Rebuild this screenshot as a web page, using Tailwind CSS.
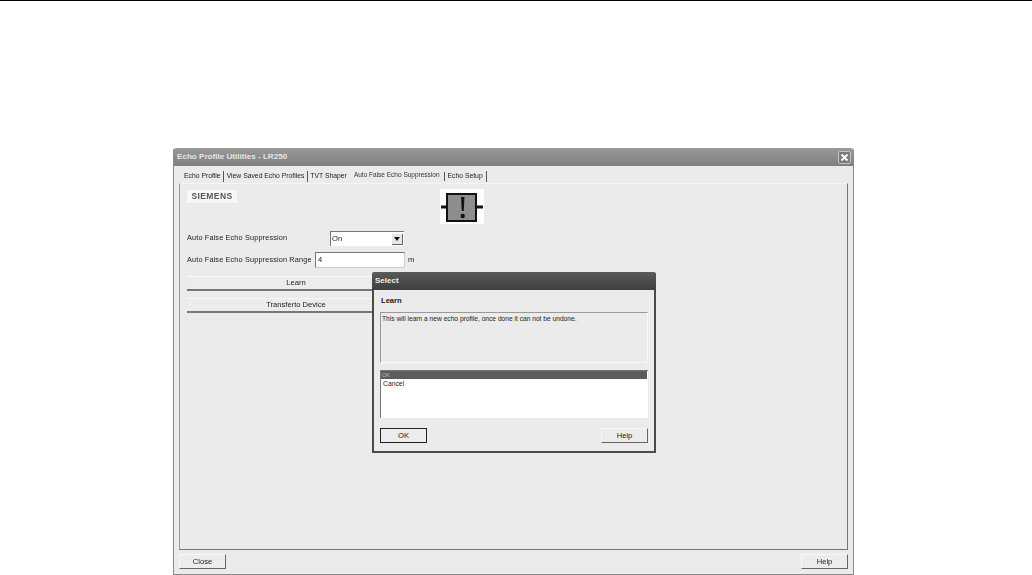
<!DOCTYPE html>
<html>
<head>
<meta charset="utf-8">
<script src="https://cdn.jsdelivr.net/npm/@tailwindcss/browser@4"></script>
</head>
<body class="bg-white w-[1032px] h-[575px] overflow-hidden font-['Liberation_Sans',Arial,sans-serif] text-[7.6px] text-[#222]">
<div class="h-px bg-black"></div>
<div class="ml-[173px] mt-[147px] w-[681px] h-[427px] flex flex-col bg-[#ebebeb] border-x border-b border-[#8a8a8a] rounded-t-[3px] blur-[0.35px]">
  <div class="h-[18px] shrink-0 flex items-center justify-between pl-[3px] pr-[2px] bg-gradient-to-b from-[#9a9a9a] via-[#8c8c8c] to-[#7f7f7f] rounded-t-[3px]">
    <span class="text-[8.1px] font-bold text-[#e6e6e6]">Echo Profile Utilities - LR250</span>
    <div class="w-[13px] h-[13px] bg-[#7c7c7c] border border-[#c4c4c4] rounded-[2px] flex items-center justify-center">
      <svg width="9" height="9" viewBox="0 0 9 9"><path d="M1.5 1.5L7.5 7.5M7.5 1.5L1.5 7.5" stroke="#fff" stroke-width="1.8"/></svg>
    </div>
  </div>
  <div class="h-[17px] shrink-0 flex items-center pt-[4px] pl-[10px] text-[6.8px] text-[#222] whitespace-nowrap">
    <span class="pr-[2px] border-r border-[#555]">Echo Profile</span>
    <span class="pl-[3px] pr-[3px] border-r border-[#555]">View Saved Echo Profiles</span>
    <span class="pl-[2px] pr-[6px]">TVT Shaper</span>
    <span class="pl-[1px] pr-[4px] border-r border-[#555] text-[6.5px] text-[#333]"><span class="block -translate-y-[2px]">Auto False Echo Suppression</span></span>
    <span class="pl-[3px] pr-[3px] border-r border-[#555]">Echo Setup</span>
  </div>
  <div class="relative mx-[5px] h-[367px] shrink-0 border-t border-t-[#f5f5f5] border-r border-r-[#777] border-b border-b-[#777] border-l border-l-[#9a9a9a] pl-[7px]">
    <div class="flex items-start">
      <div class="mt-[6px] w-[50px] h-[13px] bg-[#f7f7f7] flex items-center justify-center font-bold text-[8.5px] tracking-[0.4px] text-[#555]">SIEMENS</div>
      <div class="mt-[5px] ml-[203px] w-[44px] h-[35px] bg-white flex items-center justify-center">
        <svg width="44" height="35" viewBox="0 0 44 35">
          <path d="M1 18H7M36 18H43" stroke="#111" stroke-width="3"/>
          <rect x="7" y="5" width="29" height="27" fill="#8e8e8e" stroke="#111" stroke-width="2"/>
          <path d="M21 8H24.5L23.7 22H21.8Z" fill="#111"/>
          <circle cx="22.7" cy="27" r="2.2" fill="#111"/>
        </svg>
      </div>
    </div>
    <div class="mt-[7px] flex items-center h-[15px]">
      <span class="w-[143px] text-[7.3px] tracking-[0.15px] whitespace-nowrap">Auto False Echo Suppression</span>
      <div class="w-[74px] h-[15px] bg-white border-t border-l border-[#777] flex items-center justify-between pl-[1px] pr-[1px]">
        <span>On</span>
        <div class="w-[11px] h-[11px] bg-[#e6e6e6] border-r border-b border-[#666] flex items-center justify-center">
          <svg width="6" height="4" viewBox="0 0 6 4"><path d="M0 0H6L3 4Z" fill="#111"/></svg>
        </div>
      </div>
    </div>
    <div class="mt-[6px] flex items-center h-[16px]">
      <span class="w-[128px] text-[7.3px] tracking-[0.15px] whitespace-nowrap">Auto False Echo Suppression Range</span>
      <div class="w-[90px] h-[16px] bg-white border-t border-l border-[#777] border-b border-b-[#ccc] border-r border-r-[#ccc] flex items-center pl-[2px]">4</div>
      <span class="ml-[3px]">m</span>
    </div>
    <div class="mt-[8px] w-[218px] h-[15px] bg-[#ececec] border-t border-[#f8f8f8] border-b-2 border-b-[#777] flex items-center justify-center">Learn</div>
    <div class="mt-[7px] w-[218px] h-[15px] bg-[#ececec] border-t border-[#f8f8f8] border-b-2 border-b-[#777] flex items-center justify-center">Transferto Device</div>

    <div class="absolute left-[192px] top-[88px] w-[284px] h-[181px] flex flex-col bg-[#ebebeb] border-x-2 border-b-2 border-[#4a4a4a] rounded-t-[3px]">
      <div class="h-[18px] shrink-0 flex items-center pl-[3px] -mx-[2px] bg-gradient-to-b from-[#5a5a5a] to-[#3e3e3e] rounded-t-[3px] text-[8px] font-bold text-[#ededed]">Select</div>
      <div class="mt-[5px] ml-[7px] h-[12px] text-[7.6px] font-bold text-[#222] flex items-center">Learn</div>
      <div class="mt-[5px] mx-[6px] h-[51px] shrink-0 border-t border-l border-[#999] border-b border-b-[#f8f8f8] border-r border-r-[#f8f8f8] pl-[1px] pt-[1px] text-[6.65px] leading-[9px]">This will learn a new echo profile, once done it can not be undone.</div>
      <div class="mt-[7px] mx-[6px] h-[48px] shrink-0 bg-white border-l border-t border-[#777] pr-[1px] text-[6.8px] leading-[9px]">
        <div class="h-[8px] bg-[#5c5c5c] text-[#bbb] text-[5.5px] leading-[8px] pl-[1px]">OK</div>
        <div class="pl-[2px]">Cancel</div>
      </div>
      <div class="mt-[10px] mx-[6px] flex justify-between">
        <div class="w-[47px] h-[15px] border border-[#222] bg-[#ececec] flex items-center justify-center">OK</div>
        <div class="w-[47px] h-[15px] bg-[#ececec] border-t border-l border-[#f8f8f8] border-b border-b-[#666] border-r border-r-[#666] flex items-center justify-center">Help</div>
      </div>
    </div>
  </div>
  <div class="mt-[4px] mx-[5px] flex justify-between">
    <div class="w-[47px] h-[15px] bg-[#ececec] border-t border-l border-[#f8f8f8] border-b border-b-[#666] border-r border-r-[#666] flex items-center justify-center">Close</div>
    <div class="w-[47px] h-[15px] bg-[#ececec] border-t border-l border-[#f8f8f8] border-b border-b-[#666] border-r border-r-[#666] flex items-center justify-center">Help</div>
  </div>
</div>
</body>
</html>
